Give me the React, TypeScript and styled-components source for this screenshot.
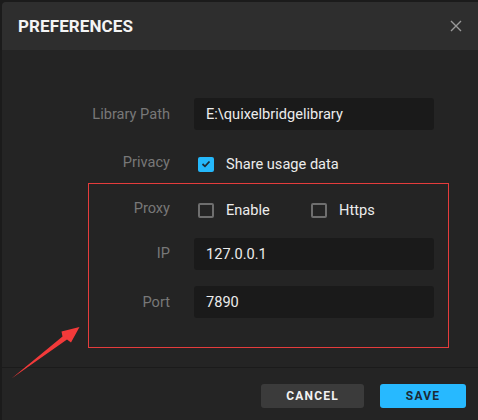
import React from "react";
import styled, { createGlobalStyle } from "styled-components";

const Global = createGlobalStyle`
  html, body { margin: 0; padding: 0; background: #1b1b1b; }
  body { font-family: Roboto, "Liberation Sans", sans-serif; }
  * { box-sizing: border-box; }
`;

const Page = styled.div`
  position: relative;
  width: 478px;
  height: 420px;
  padding: 2px 0 0 2px;
  background: #1b1b1b;
  overflow: hidden;
`;

const Dialog = styled.div`
  display: flex;
  flex-direction: column;
  height: 418px;
  background: #242424;
  border-radius: 4px 0 0 0;
  overflow: hidden;
`;

const Header = styled.div`
  display: flex;
  align-items: center;
  justify-content: space-between;
  height: 48px;
  padding: 0 14px 0 16px;
  background: #2e2e2e;
`;

const Title = styled.h1`
  margin: 0;
  font-size: 17px;
  font-weight: 700;
  color: #f4f4f4;
  letter-spacing: 0.1px;
`;

const CloseButton = styled.button`
  display: flex;
  align-items: center;
  justify-content: center;
  width: 16px;
  height: 16px;
  padding: 0;
  border: none;
  background: none;
  cursor: pointer;
`;

const Body = styled.div`
  flex: 1;
  display: flex;
  flex-direction: column;
  padding-top: 48px;
`;

const Row = styled.div<{ $mt?: number }>`
  display: grid;
  grid-template-columns: 168px 240px;
  column-gap: 24px;
  align-items: center;
  height: 32px;
  margin-top: ${(p) => p.$mt ?? 0}px;
`;

const Label = styled.span<{ $dy?: number }>`
  text-align: right;
  font-size: 14.6px;
  color: #787878;
  position: relative;
  top: ${(p) => p.$dy ?? 0}px;
`;

const Input = styled.div`
  height: 32px;
  display: flex;
  align-items: center;
  padding: 0 12px;
  background: #1a1a1a;
  border-radius: 3px;
  font-size: 14.6px;
  color: #ececec;
`;

const Options = styled.div`
  display: flex;
  align-items: center;
  padding-left: 4px;
`;

const Option = styled.label<{ $w?: number }>`
  display: flex;
  align-items: center;
  gap: 12px;
  width: ${(p) => (p.$w ? `${p.$w}px` : "auto")};
  font-size: 14.6px;
  color: #ececec;
`;

const Box = styled.span<{ $checked?: boolean }>`
  display: flex;
  align-items: center;
  justify-content: center;
  width: 16px;
  height: 15px;
  border-radius: 2px;
  background: ${(p) => (p.$checked ? "#25b8fb" : "transparent")};
  border: ${(p) => (p.$checked ? "none" : "2px solid #6e6e6e")};
`;

const Footer = styled.div`
  display: flex;
  justify-content: flex-end;
  gap: 16px;
  height: 53px;
  padding: 16px 12px 0 0;
  border-top: 1px solid #1b1b1b;
`;

const Button = styled.button<{ $primary?: boolean }>`
  height: 24px;
  width: ${(p) => (p.$primary ? 86 : 103)}px;
  border: none;
  border-radius: 3px;
  background: ${(p) => (p.$primary ? "#27b9ff" : "#3b3b3b")};
  color: ${(p) => (p.$primary ? "#1c2a35" : "#f2f2f2")};
  font-family: Roboto, "Liberation Sans", sans-serif;
  font-size: 12px;
  font-weight: 700;
  letter-spacing: 1.2px;
  cursor: pointer;
`;

const Highlight = styled.div`
  position: absolute;
  left: 88px;
  top: 183px;
  width: 361px;
  height: 165px;
  border: 1px solid #e53c3c;
  pointer-events: none;
`;

const Arrow = styled.svg`
  position: absolute;
  left: 0;
  top: 310px;
  pointer-events: none;
`;

export default function App() {
  return (
    <Page>
      <Global />
      <Dialog>
        <Header>
          <Title>PREFERENCES</Title>
          <CloseButton aria-label="close">
            <svg width="12" height="12" viewBox="0 0 12 12">
              <path d="M1 1L11 11M11 1L1 11" stroke="#9a9a9a" strokeWidth="1.4" />
            </svg>
          </CloseButton>
        </Header>
        <Body>
          <Row>
            <Label>Library Path</Label>
            <Input>E:\quixelbridgelibrary</Input>
          </Row>
          <Row $mt={18}>
            <Label $dy={-2}>Privacy</Label>
            <Options>
              <Option>
                <Box $checked>
                  <svg width="10" height="8" viewBox="0 0 10 8">
                    <path d="M1.5 4L4 6.3L8.5 1.5" fill="none" stroke="#1d2b36" strokeWidth="1.8" />
                  </svg>
                </Box>
                Share usage data
              </Option>
            </Options>
          </Row>
          <Row $mt={14}>
            <Label $dy={-2}>Proxy</Label>
            <Options>
              <Option $w={113}>
                <Box />
                Enable
              </Option>
              <Option>
                <Box />
                Https
              </Option>
            </Options>
          </Row>
          <Row $mt={12}>
            <Label $dy={-1}>IP</Label>
            <Input>127.0.0.1</Input>
          </Row>
          <Row $mt={16}>
            <Label>Port</Label>
            <Input>7890</Input>
          </Row>
        </Body>
        <Footer>
          <Button>CANCEL</Button>
          <Button $primary>SAVE</Button>
        </Footer>
      </Dialog>
      <Highlight />
      <Arrow width="90" height="80" viewBox="0 310 90 80">
        <polygon
          points="11.5,378.5 62.5,336.5 61.5,331.5 79.5,327 71,342.5 67,339.5"
          fill="#f23a3a"
        />
      </Arrow>
    </Page>
  );
}
